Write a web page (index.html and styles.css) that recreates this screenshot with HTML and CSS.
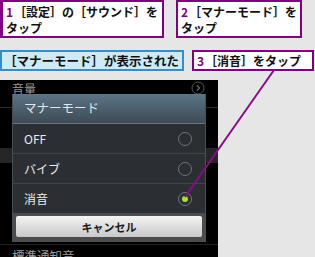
FILE: index.html
```html
<!DOCTYPE html>
<html lang="ja">
<head>
<meta charset="utf-8">
<link rel="stylesheet" href="styles.css">
</head>
<body>
<div class="page">
  <div class="row top">
    <div class="callout c1"><div class="ln"><span class="num">1</span>［設定］の［サウンド］を</div><div class="ln">タップ</div></div>
    <div class="callout c2"><div class="ln"><span class="num">2</span>［マナーモード］を</div><div class="ln">タップ</div></div>
  </div>
  <div class="row mid">
    <div class="label">［マナーモード］が表示された</div>
    <div class="callout c3"><span class="num">3</span>［消音］をタップ</div>
  </div>
  <div class="phone">
    <div class="bglist">
      <div class="bghead">
        <span class="bgtitle">音量</span>
        <svg class="chev" width="14" height="14" viewBox="0 0 14 14"><circle cx="7" cy="7" r="6" fill="none" stroke="#555" stroke-width="1"/><path d="M5.8 4.3 L8.5 7 L5.8 9.7" fill="none" stroke="#666" stroke-width="1.3"/></svg>
      </div>
      <div class="bgspace"></div>
      <div class="bghl"></div>
      <div class="bgspace2"></div>
      <div class="bgrow">標準通知音</div>
    </div>
    <div class="dialog">
      <div class="dtitle">マナーモード</div>
      <div class="opt"><span>OFF</span><span class="radio"></span></div>
      <div class="opt"><span>バイブ</span><span class="radio"></span></div>
      <div class="opt last"><span>消音</span><span class="radio on"></span></div>
      <div class="dfoot"><div class="btn">キャンセル</div></div>
    </div>
  </div>
  <svg class="leader" width="315" height="257" viewBox="0 0 315 257"><line x1="274" y1="70" x2="185" y2="197" stroke="#8a0a8a" stroke-width="2"/></svg>
</div>
</body>
</html>
```

FILE: styles.css
```css
html, body {
  margin: 0;
  padding: 0;
}
body {
  background: #e6e6e6;
  width: 315px;
  height: 257px;
  overflow: hidden;
  font-family: "Noto Sans CJK JP", "Noto Sans", sans-serif;
}
.page {
  position: relative;
  width: 315px;
  height: 257px;
}
.row {
  display: flex;
}
.top {
  gap: 12px;
  height: 38px;
}
.mid {
  margin-top: 12px;
  gap: 8px;
  height: 21px;
}
.callout {
  box-sizing: border-box;
  background: #fff;
  border: 2px solid #800080;
  font-weight: bold;
  font-size: 12px;
  line-height: 16px;
  color: #111;
  padding: 2px 0 0 3px;
  white-space: nowrap;
}
.ln {
  height: 16px;
}
.num {
  color: #800080;
  margin-right: 1px;
}
.c1 { width: 164px; height: 38px; border-left-width: 3px; }
.c2 { width: 126px; height: 38px; }
.c3 { width: 122px; height: 21px; padding-top: 0; line-height: 17px; }
.label {
  box-sizing: border-box;
  width: 184px;
  height: 21px;
  background: #cdeaf5;
  border: 2px solid #3a8cc4;
  font-weight: bold;
  font-size: 12.5px;
  line-height: 17px;
  padding-left: 2px;
  color: #111;
  white-space: nowrap;
}
.phone {
  position: relative;
  margin-top: 9px;
  width: 218px;
  height: 177px;
  background: #000;
  overflow: hidden;
}
.bglist {
  display: flex;
  flex-direction: column;
}
.bghead {
  height: 27px;
  border-bottom: 1px solid #2a2a2a;
  display: flex;
  justify-content: space-between;
  padding: 0 12px 0 12px;
}
.bgtitle {
  color: #9a9a9a;
  font-size: 12px;
  line-height: 14px;
  padding-top: 2px;
}
.chev {
  margin-top: 1px;
  margin-right: 1px;
}
.bgspace { height: 40px; }
.bghl { height: 15px; background: #262626; }
.bgspace2 { height: 81px; border-bottom: 1px solid #222; }
.bgrow {
  color: #9a9a9a;
  font-size: 12.5px;
  line-height: 14px;
  padding: 4px 0 0 12px;
}
.dialog {
  position: absolute;
  left: 12px;
  top: 14px;
  width: 194px;
  height: 148px;
  box-sizing: border-box;
  border: 1px solid #4a4f54;
  border-top: none;
  background: #2b2f33;
  display: flex;
  flex-direction: column;
}
.dtitle {
  height: 29px;
  background: linear-gradient(#5b7486, #3d4b56);
  border-bottom: 1px solid #6a7480;
  color: #e6e6e6;
  font-size: 12.5px;
  line-height: 28px;
  padding-left: 11px;
}
.opt {
  height: 29px;
  border-bottom: 1px solid #3f4448;
  display: flex;
  align-items: center;
  justify-content: space-between;
  padding: 0 13px 0 11px;
  color: #ececec;
  font-size: 12px;
}
.opt.last { border-bottom: none; height: 29px; }
.radio {
  box-sizing: border-box;
  width: 14px;
  height: 14px;
  border-radius: 50%;
  border: 1px solid #707478;
  display: flex;
  align-items: center;
  justify-content: center;
}
.radio.on::after {
  content: "";
  width: 6px;
  height: 6px;
  border-radius: 50%;
  background: #a6e22a;
}
.dfoot {
  flex: 1;
  background: #4a4c4e;
  padding: 3px 3px 4px 3px;
  display: flex;
}
.btn {
  flex: 1;
  background: linear-gradient(#f4f4f4, #c9c9c9);
  border-radius: 2px;
  font-weight: bold;
  font-size: 11px;
  color: #1a1a1a;
  display: flex;
  align-items: center;
  justify-content: center;
}
.leader {
  position: absolute;
  left: 0;
  top: 0;
  pointer-events: none;
}
```
